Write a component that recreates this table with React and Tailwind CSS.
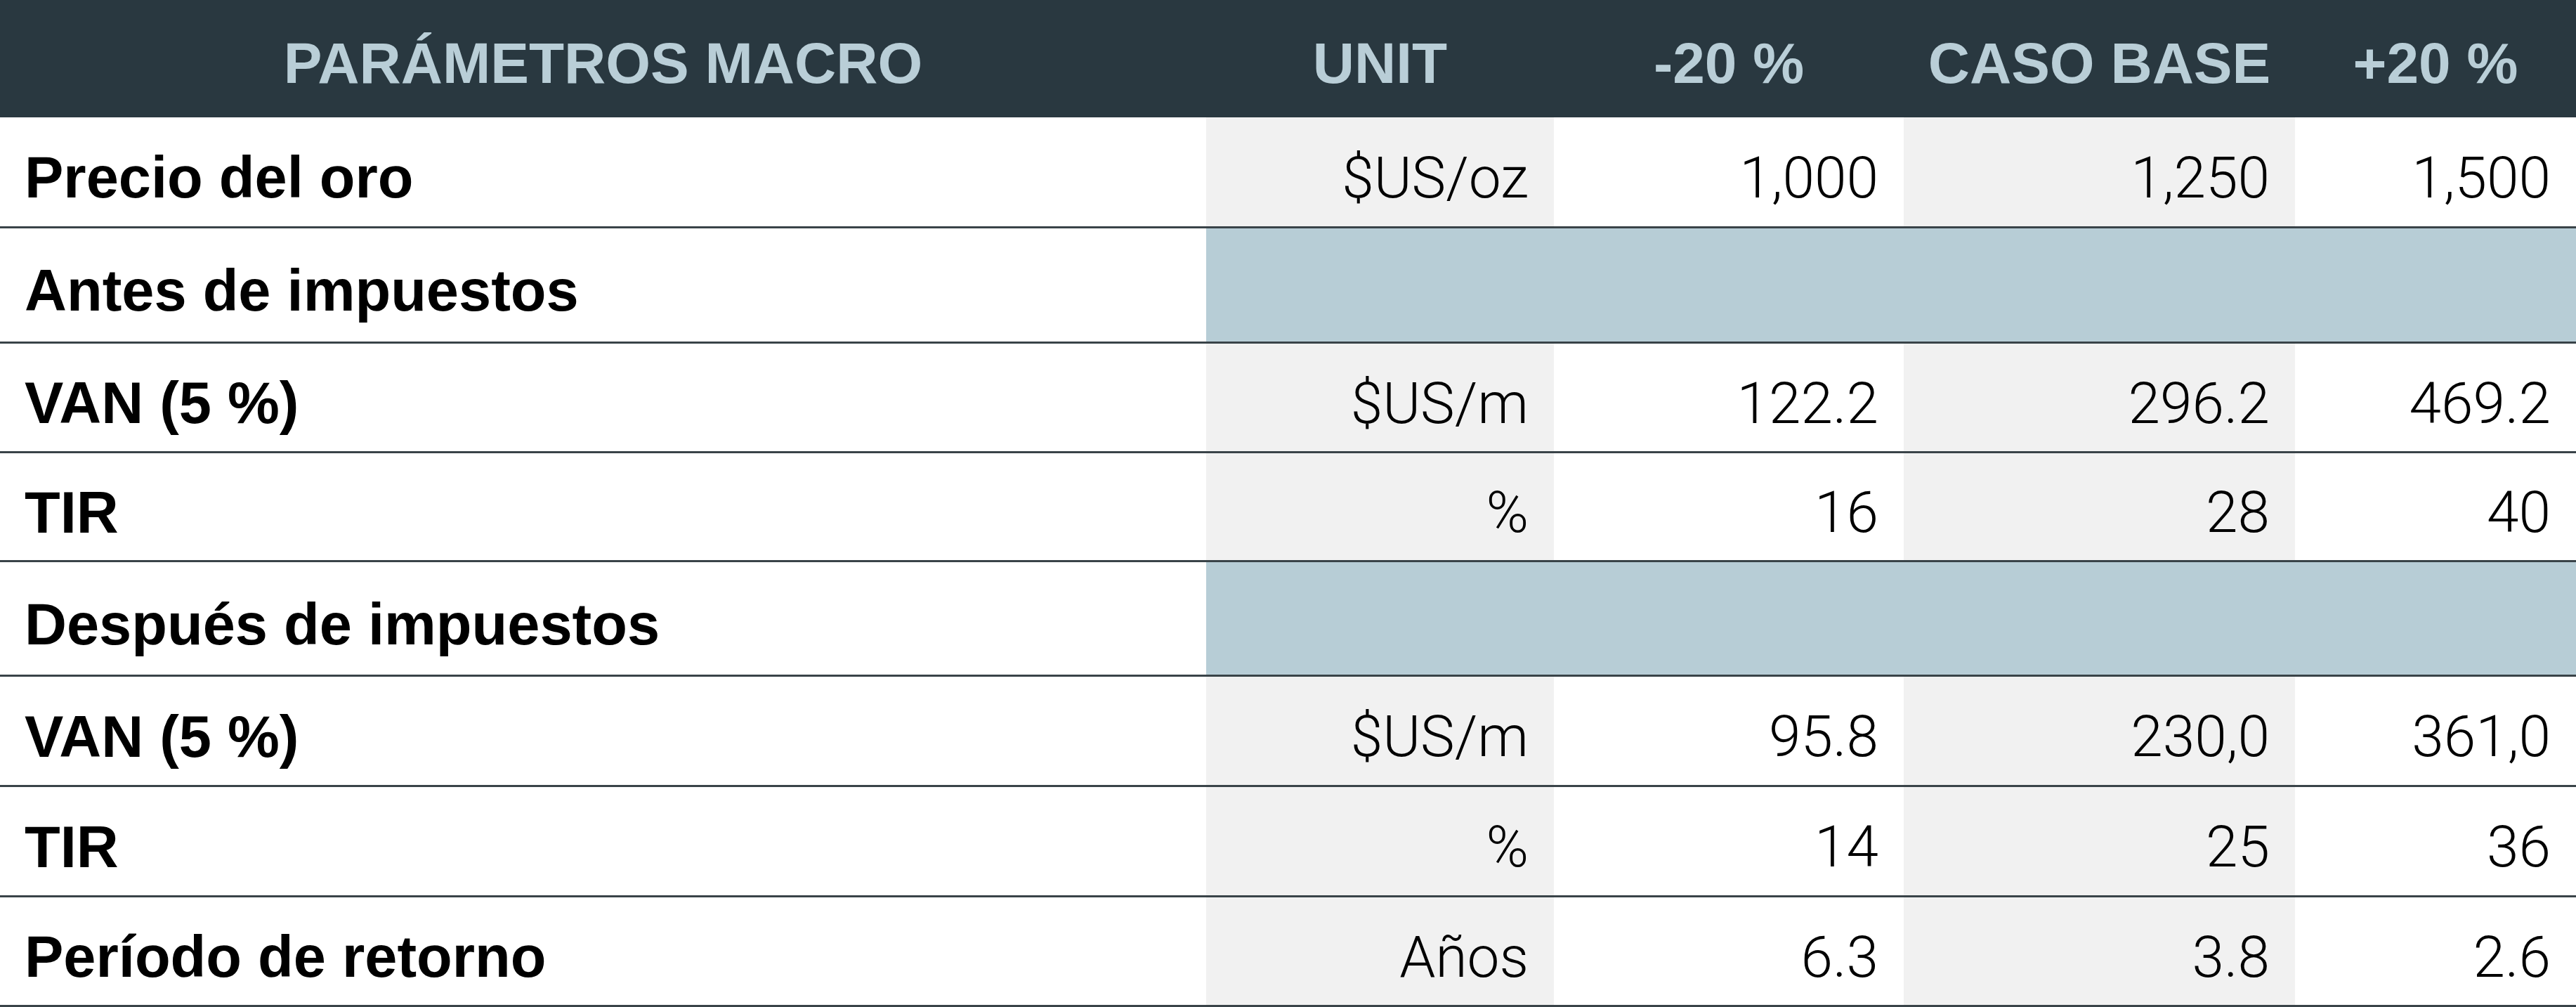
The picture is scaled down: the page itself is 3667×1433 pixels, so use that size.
import React from "react";

const rows = [
  { type: "data", label: "Precio del oro", unit: "$US/oz", a: "1,000", b: "1,250", c: "1,500", h: "h-[158px]" },
  { type: "section", label: "Antes de impuestos", h: "h-[164px]" },
  { type: "data", label: "VAN (5 %)", unit: "$US/m", a: "122.2", b: "296.2", c: "469.2", h: "h-[156px]" },
  { type: "data", label: "TIR", unit: "%", a: "16", b: "28", c: "40", h: "h-[155px]" },
  { type: "section", label: "Después de impuestos", h: "h-[163px]" },
  { type: "data", label: "VAN (5 %)", unit: "$US/m", a: "95.8", b: "230,0", c: "361,0", h: "h-[157px]" },
  { type: "data", label: "TIR", unit: "%", a: "14", b: "25", c: "36", h: "h-[157px]" },
  { type: "data", label: "Período de retorno", unit: "Años", a: "6.3", b: "3.8", c: "2.6", h: "h-[156px]" },
];

const grid = "grid grid-cols-[1717px_495px_498px_557px_400px]";
const numFont = "font-['Roboto','Liberation_Sans',sans-serif] font-light text-[82px] leading-none text-black";

function Num({ children, gray }) {
  return (
    <div className={`flex items-center justify-end pr-[36px] pt-[16px] ${gray ? "bg-[#f1f1f1]" : "bg-white"}`}>
      <span className={numFont}>{children}</span>
    </div>
  );
}

export default function App() {
  return (
    <div className="w-[3667px] h-[1433px] bg-white font-['Liberation_Sans',Arial,sans-serif] overflow-hidden">
      <div className={`${grid} h-[167px] bg-[#293840] text-[#b9ced7] font-bold text-[82px] leading-none`}>
        <div className="flex items-center justify-center pt-[12px]">PARÁMETROS MACRO</div>
        <div className="flex items-center justify-center pt-[12px]">UNIT</div>
        <div className="flex items-center justify-center pt-[12px]">-20 %</div>
        <div className="flex items-center justify-center pt-[12px]">CASO BASE</div>
        <div className="flex items-center justify-center pt-[12px]">+20 %</div>
      </div>
      {rows.map((r, i) => (
        <div key={i} className={`${grid} ${r.h} border-b-[3px] border-[#394348]`}>
          <div className="flex items-center pl-[35px] pt-[16px] bg-white">
            <span className="font-bold text-[83px] leading-none text-black">{r.label}</span>
          </div>
          {r.type === "section" ? (
            <div className="col-span-4 bg-[#b7cdd6]" />
          ) : (
            <>
              <Num gray>{r.unit}</Num>
              <Num>{r.a}</Num>
              <Num gray>{r.b}</Num>
              <Num>{r.c}</Num>
            </>
          )}
        </div>
      ))}
    </div>
  );
}
